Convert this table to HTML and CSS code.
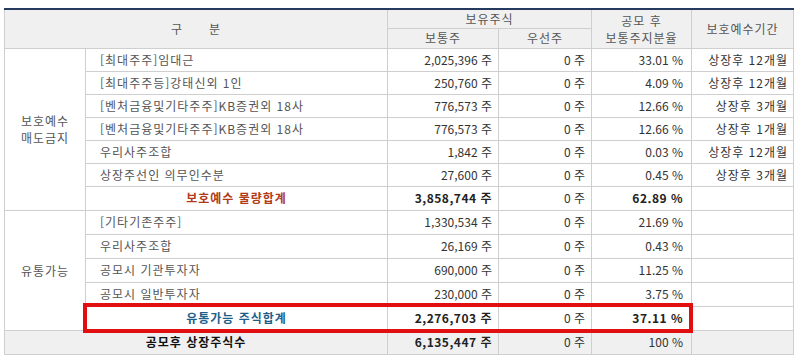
FILE: index.html
```html
<!DOCTYPE html>
<html lang="ko">
<head>
<meta charset="utf-8">
<link rel="stylesheet" href="styles.css">
</head>
<body>
<div class="wrap">
<table class="tbl">
<colgroup>
<col class="c1"><col class="c2"><col class="c3"><col class="c4"><col class="c5"><col class="c6">
</colgroup>
<thead>
<tr class="h1">
<th colspan="2" rowspan="2">구&nbsp;&nbsp;&nbsp;&nbsp;&nbsp;&nbsp;분</th>
<th colspan="2">보유주식</th>
<th rowspan="2" class="two">공모 후<br>보통주지분율</th>
<th rowspan="2">보호예수기간</th>
</tr>
<tr class="h2">
<th>보통주</th>
<th>우선주</th>
</tr>
</thead>
<tbody>
<tr class="r">
<td rowspan="7" class="grp">보호예수<br>매도금지</td>
<td class="name">[최대주주]임대근</td>
<td class="num">2,025,396 주</td><td class="num">0 주</td><td class="pct">33.01 %</td><td class="per">상장후 12개월</td>
</tr>
<tr class="r">
<td class="name">[최대주주등]강태신외 1인</td>
<td class="num">250,760 주</td><td class="num">0 주</td><td class="pct">4.09 %</td><td class="per">상장후 12개월</td>
</tr>
<tr class="r">
<td class="name">[벤처금융및기타주주]KB증권외 18사</td>
<td class="num">776,573 주</td><td class="num">0 주</td><td class="pct">12.66 %</td><td class="per">상장후 3개월</td>
</tr>
<tr class="r">
<td class="name">[벤처금융및기타주주]KB증권외 18사</td>
<td class="num">776,573 주</td><td class="num">0 주</td><td class="pct">12.66 %</td><td class="per">상장후 1개월</td>
</tr>
<tr class="r">
<td class="name">우리사주조합</td>
<td class="num">1,842 주</td><td class="num">0 주</td><td class="pct">0.03 %</td><td class="per">상장후 12개월</td>
</tr>
<tr class="r">
<td class="name">상장주선인 의무인수분</td>
<td class="num">27,600 주</td><td class="num">0 주</td><td class="pct">0.45 %</td><td class="per">상장후 3개월</td>
</tr>
<tr class="s">
<td class="sub-red">보호예수 물량합계</td>
<td class="num b">3,858,744 주</td><td class="num">0 주</td><td class="pct b">62.89 %</td><td class="per"></td>
</tr>
<tr class="s">
<td rowspan="5" class="grp">유통가능</td>
<td class="name">[기타기존주주]</td>
<td class="num">1,330,534 주</td><td class="num">0 주</td><td class="pct">21.69 %</td><td class="per"></td>
</tr>
<tr class="s">
<td class="name">우리사주조합</td>
<td class="num">26,169 주</td><td class="num">0 주</td><td class="pct">0.43 %</td><td class="per"></td>
</tr>
<tr class="s">
<td class="name">공모시 기관투자자</td>
<td class="num">690,000 주</td><td class="num">0 주</td><td class="pct">11.25 %</td><td class="per"></td>
</tr>
<tr class="s">
<td class="name">공모시 일반투자자</td>
<td class="num">230,000 주</td><td class="num">0 주</td><td class="pct">3.75 %</td><td class="per"></td>
</tr>
<tr class="s">
<td class="sub-blue">유통가능 주식합계</td>
<td class="num b">2,276,703 주</td><td class="num">0 주</td><td class="pct b">37.11 %</td><td class="per"></td>
</tr>
<tr class="s total">
<td colspan="2" class="tot-label">공모후 상장주식수</td>
<td class="num b">6,135,447 주</td><td class="num">0 주</td><td class="pct">100 %</td><td class="per"></td>
</tr>
</tbody>
</table>
<div class="highlight"></div>
</div>
</body>
</html>
```

FILE: styles.css
```css
html, body {
  margin: 0;
  padding: 0;
  background: #ffffff;
}
body {
  padding: 8px 0 0 4px;
  font-family: "Noto Sans CJK KR", "Noto Sans", sans-serif;
  font-size: 12px;
  color: #444;
}
.wrap {
  position: relative;
  width: 789px;
}
.tbl {
  border-collapse: collapse;
  table-layout: fixed;
  width: 789px;
  border-top: 2px solid #253a5e;
}
.c1 { width: 81px; }
.c2 { width: 302px; }
.c3 { width: 111px; }
.c4 { width: 93px; }
.c5 { width: 100px; }
.c6 { width: 102px; }
.tbl th, .tbl td {
  border: 1px solid #cfcfcf;
  padding: 0;
  line-height: 14px;
  white-space: nowrap;
  overflow: hidden;
}
.tbl th {
  background: #f0f0f0;
  font-weight: normal;
  color: #555;
  text-align: center;
  vertical-align: middle;
  letter-spacing: 1px;
}
.tbl thead tr:first-child th { border-top: 2px solid #253a5e; }
.h1 { height: 19px; }
.h2 { height: 20px; }
.tbl th.two { line-height: 17px; }
.r { height: 23px; }
.s { height: 24px; }
.tbl td.grp {
  text-align: center;
  color: #555;
  line-height: 17px;
  letter-spacing: 1px;
}
.name {
  text-align: left;
  padding-left: 14px !important;
  color: #555;
  letter-spacing: 1px;
}
.num {
  text-align: right;
  padding-right: 6px !important;
  color: #333;
}
.pct {
  text-align: right;
  padding-right: 8px !important;
  color: #333;
}
.per {
  text-align: right;
  padding-right: 5px !important;
  color: #333;
  letter-spacing: 1px;
}
.b { font-weight: bold; color: #222; letter-spacing: 0.5px; }
.sub-red {
  text-align: center;
  font-weight: bold;
  color: #b23a17;
  letter-spacing: 1px;
}
.sub-blue {
  text-align: center;
  font-weight: bold;
  color: #1d5f8c;
  letter-spacing: 1px;
}
.total td { background: #f0f0f0; }
.tot-label {
  text-align: center;
  font-weight: bold;
  color: #111;
  letter-spacing: 1px;
}
.highlight {
  position: absolute;
  left: 79px;
  top: 295px;
  width: 610px;
  height: 30px;
  box-sizing: border-box;
  border: 4px solid #e10f0f;
  pointer-events: none;
}
```
